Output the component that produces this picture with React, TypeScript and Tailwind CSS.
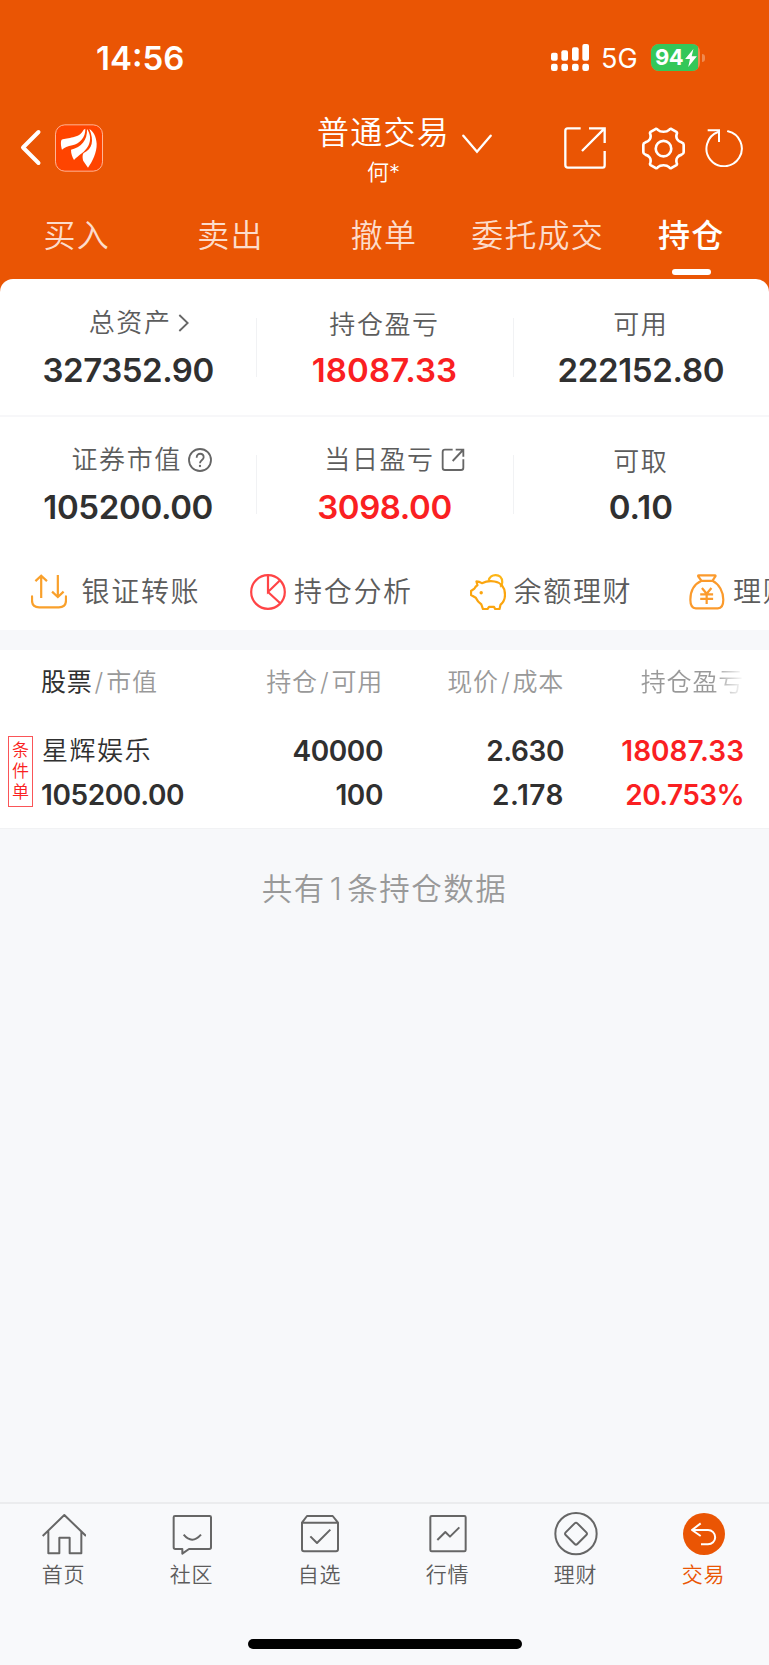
import type { ReactNode } from 'react';

const TABS = ['买入', '卖出', '撤单', '委托成交', '持仓'];

interface Stat {
  label: string;
  value: string;
  red?: boolean;
  icon?: ReactNode;
  shift?: string;
  tracking?: string;
}

const SUMMARY_TOP: Stat[] = [
  {
    label: '总资产',
    value: '327352.90',
    icon: <ArrowRight />,
    shift: '-mt-[1px] mb-[1px] pl-[21px]',
    tracking: 'tracking-[-0.45px]',
  },
  { label: '持仓盈亏', value: '18087.33', red: true, shift: 'mt-[1px] -mb-[1px]', tracking: 'tracking-[0.1px]' },
  { label: '可用', value: '222152.80', shift: 'mt-[1px] -mb-[1px]', tracking: 'tracking-[-0.3px]' },
];

const SUMMARY_BOTTOM: Stat[] = [
  { label: '证券市值', value: '105200.00', icon: <Help />, shift: 'pl-[27px]', tracking: 'tracking-[-0.35px]' },
  {
    label: '当日盈亏',
    value: '3098.00',
    red: true,
    icon: <SmallExternal />,
    shift: 'pl-[20px]',
    tracking: 'tracking-[-0.4px]',
  },
  { label: '可取', value: '0.10', shift: 'mt-[2px] -mb-[2px]' },
];

function ArrowRight() {
  return (
    <svg className="ml-[6px] h-[18px] w-[11px]" viewBox="0 0 33 54" fill="none" stroke="#666" strokeWidth="5.5">
      <path d="M4 3L29 27L4 51" />
    </svg>
  );
}

function Help() {
  return (
    <svg className="ml-[6px] h-[24px] w-[24px]" viewBox="0 0 72 72" fill="none" stroke="#666" strokeWidth="5.5">
      <circle cx="36" cy="36" r="33" />
      <path d="M26 29C26 13 47 14 47 28C47 36 36 36 36 46" />
      <circle cx="36" cy="54" r="3.5" fill="#666" stroke="none" />
    </svg>
  );
}

function SmallExternal() {
  return (
    <svg className="ml-[6px] h-[24px] w-[24px]" viewBox="0 0 72 72" fill="none" stroke="#666" strokeWidth="5.5">
      <path d="M35 5H12Q5 5 5 12V59Q5 66 12 66H60Q67 66 67 59V34" />
      <path d="M44 5H67V26M66 6L35 39" />
    </svg>
  );
}

function StatRow({ items, pad, gap, bar }: { items: Stat[]; pad: string; gap: string; bar: string }) {
  return (
    <div className="grid grid-cols-3">
      {items.map((s, i) => (
        <div key={s.label} className="flex">
          <div className={`flex flex-1 flex-col items-center ${pad}`}>
            <div className={`flex h-[40px] items-center ${s.shift ?? ''}`}>
              <span className="text-[26px] leading-[40px] font-[350] tracking-[1.6px] text-[#5c5c5c]">{s.label}</span>
              {s.icon}
            </div>
            <div
              className={`text-[33px] leading-[40px] font-semibold ${gap} ${s.tracking ?? ''} ${s.red ? 'text-[#fa1f22]' : 'text-[#303030]'}`}
            >
              {s.value}
            </div>
          </div>
          {i < 2 ? <div className={`-mr-px h-[59px] w-px bg-[#f1f2f4] ${bar}`} /> : null}
        </div>
      ))}
    </div>
  );
}

function Logo() {
  return (
    <svg className="h-[48px] w-[48px]" viewBox="0 0 144 142">
      <rect x="1.5" y="1.5" width="141" height="139" rx="28" fill="#ff4400" stroke="#ffb596" strokeWidth="3" />
      <g fill="#fff">
        <path d="M20 46C38 38 72 44 86 16L91 13C92 38 75 58 52 63C38 66 28 70 21 76C18 66 16 52 20 46Z" />
        <path d="M96 14C97 48 80 68 48 76C48 88 52 98 57 107C70 92 90 84 100 64C109 46 106 28 96 14Z" />
        <path d="M103 14C118 50 112 74 86 86C81 92 83 104 85 110L99 130C112 112 126 84 125 58C124 38 116 22 103 14Z" />
      </g>
    </svg>
  );
}

function StatusBar() {
  return (
    <div className="flex h-[112px] items-center justify-between pt-[3px] pr-[64px] pl-[96px]">
      <span className="text-[33px] leading-[40px] font-semibold">14:56</span>
      <div className="flex items-center">
        <svg className="h-[27px] w-[38px]" viewBox="0 0 114 81" fill="#fff">
          <rect x="0" y="26" width="20" height="24" rx="6" />
          <rect x="31" y="19" width="20" height="31" rx="6" />
          <rect x="63" y="10" width="20" height="40" rx="6" />
          <rect x="94" y="0" width="20" height="50" rx="6" />
          <rect x="0" y="59" width="20" height="22" rx="7" />
          <rect x="31" y="59" width="20" height="22" rx="7" />
          <rect x="63" y="59" width="20" height="22" rx="7" />
          <rect x="94" y="59" width="20" height="22" rx="7" />
        </svg>
        <span className="ml-[12px] w-[50px] pt-[2px] text-[27px] leading-[32px]">5G</span>
        <div className="flex h-[27px] w-[49px] overflow-hidden rounded-[8px] bg-[#f08a50]">
          <div className="flex h-full w-[47px] items-center bg-[#34c759] pl-[4px]">
            <span className="text-[22px] leading-[27px] font-bold tracking-[-0.5px]">94</span>
            <svg className="ml-[2px] h-[18px] w-[12px]" viewBox="0 0 34 52" fill="#fff">
              <path d="M24 0L0 29H14L9 52L34 21H19Z" />
            </svg>
          </div>
        </div>
        <div className="ml-[2px] h-[8px] w-[3px] rounded-r-full bg-[#f08a50]" />
      </div>
    </div>
  );
}

function TitleBar() {
  return (
    <div className="grid h-[80px] grid-cols-[317px_133px_1fr]">
      <div className="flex items-center pb-[9px] pl-[20px]">
        <svg className="h-[37px] w-[22px]" viewBox="0 0 22 37" fill="none" stroke="#fff" strokeWidth="4" strokeLinecap="round" strokeLinejoin="round">
          <path d="M18.5 3L3 18.5L18.5 34" />
        </svg>
        <div className="ml-[13px]">
          <Logo />
        </div>
      </div>
      <div className="text-center whitespace-nowrap">
        <div className="pt-[1px] text-[32px] leading-[40px] font-[350] tracking-[1.2px]">普通交易</div>
        <div className="-mt-[1px] text-[22px] leading-[40px] font-[350]">何*</div>
      </div>
      <div className="flex items-center pb-[8px] pl-[12px]">
        <svg className="-mt-[8px] h-[20px] w-[30px]" viewBox="0 0 90 60" fill="none" stroke="#fff" strokeWidth="7" strokeLinecap="round">
          <path d="M4 5L45 53L86 5" />
        </svg>
        <svg className="ml-[72px] h-[42px] w-[42px]" viewBox="0 0 126 126" fill="none" stroke="#fff" strokeWidth="7">
          <path d="M50 4H11Q4 4 4 11V114Q4 122 12 122H116Q122 122 122 115V72" />
          <path d="M75 4H122V48M121 5L54 72" />
        </svg>
        <svg className="ml-[36px] h-[43px] w-[43px]" viewBox="0 0 130 127" fill="none" stroke="#fff" strokeWidth="8" strokeLinejoin="round">
          <path d="M88 4L104 13Q107 15 105 20C101 32 108 42 120 45Q126 47 126 52V75Q126 80 120 82C108 85 101 95 105 107Q107 112 104 114L88 123Q85 124 82 120C74 112 56 112 48 120Q45 124 42 123L26 114Q23 112 25 107C29 95 22 85 10 82Q4 80 4 75V52Q4 47 10 45C22 42 29 32 25 20Q23 15 26 13L42 4Q45 3 48 7C56 15 74 15 82 7Q85 3 88 4Z" />
          <circle cx="65" cy="64" r="23.5" />
        </svg>
        <svg className="ml-[20px] h-[38px] w-[38px]" viewBox="0 0 114 114" fill="none" stroke="#fff" strokeWidth="6">
          <path d="M69 7A53 53 0 1 1 39 9" strokeLinecap="round" />
          <path d="M8 4H42V39" />
        </svg>
      </div>
    </div>
  );
}

const QUICK_LINKS = [
  {
    label: '银证转账',
    gap: 'gap-[15px]',
    icon: (
      <g stroke="#f9a02b">
        <path d="M3 66V78Q3 98 24 98H82Q103 98 103 78V66" strokeLinecap="round" />
        <path d="M30 71V5M13 21L30 5L47 21M79 3V68M62 52L79 68L96 52" />
      </g>
    ),
  },
  {
    label: '持仓分析',
    gap: 'gap-[8px]',
    icon: (
      <g stroke="#ff4446">
        <circle cx="53" cy="53" r="49.5" />
        <path d="M53 3V53L87 20M53 53L89 86" />
      </g>
    ),
  },
  {
    label: '余额理财',
    gap: 'gap-[8px]',
    icon: (
      <g stroke="#fba50f" strokeLinejoin="round">
        <path d="M55 20C58 -2 95 -4 95 24Q95 33 89 38" stroke="#fdb515" />
        <path d="M19 22Q27 22 35 27C48 21 59 20 72 22C91 25 103 40 103 61C103 74 99 83 90 90L87 103H74L71 97H56L52 103H38L33 89Q23 83 17 70L3 62V50L13 43Q16 36 22 33Z" />
        <circle cx="33" cy="55" r="5" fill="#fba50f" stroke="none" />
      </g>
    ),
  },
  {
    label: '理财',
    gap: 'gap-[8px]',
    icon: (
      <g stroke="#fb9a2c" strokeLinejoin="round">
        <path d="M29 4H76Q80 4 77 8L69 20H37L28 8Q25 4 29 4Z" />
        <path d="M37 20C15 30 4 52 4 76Q4 101 20 101H85Q101 101 101 76C101 52 89 30 69 20" />
        <path d="M38 41L52 58L66 41M52 58V88M33 60H71M33 73H71" />
      </g>
    ),
  },
];

function QuickLinks() {
  return (
    <div className="flex h-[76px] items-center gap-[49.5px] overflow-hidden pl-[30.5px]">
      {QUICK_LINKS.map((q) => (
        <div key={q.label} className={`flex w-[170px] shrink-0 items-center ${q.gap}`}>
          <svg className="h-[36px] w-[36px] shrink-0" viewBox="0 0 106 106" fill="none" strokeWidth="6.5">
            {q.icon}
          </svg>
          <span className="text-[28px] leading-[40px] font-[350] tracking-[1.7px] whitespace-nowrap text-[#5c5c5c]">
            {q.label}
          </span>
        </div>
      ))}
    </div>
  );
}

function Holdings() {
  return (
    <div className="bg-white">
      <div className="grid h-[63px] grid-cols-[222px_161px_181px_1fr] items-center text-right text-[25px] leading-[40px] font-[350] tracking-[0.8px] text-[#999]">
        <div className="pl-[41px] text-left">
          <span className="font-normal text-[#303030]">股票</span>
          <span className="px-[2px]">/</span>市值
        </div>
        <div>
          持仓<span className="px-[2px]">/</span>可用
        </div>
        <div>
          现价<span className="px-[2px]">/</span>成本
        </div>
        <div className="pr-[25px]">
          <span className="bg-linear-to-r from-[#999] from-70% to-white bg-clip-text text-transparent">持仓盈亏</span>
        </div>
      </div>
      <div className="flex h-[116px] border-b border-[#f1f2f4] pt-[16px]">
        <div className="mt-[7px] ml-[8px] flex h-[71px] w-[25px] flex-col items-center justify-center border border-[#fa5558] text-[17px] leading-[21px] font-[350] text-[#fa1f22]">
          <span>条</span>
          <span>件</span>
          <span>单</span>
        </div>
        <div className="grid flex-1 grid-cols-[189px_161px_181px_180px] content-start text-right text-[28px] leading-[44px] font-semibold tracking-[-0.4px] text-[#303030]">
          <div className="pl-[9px] text-left text-[26px] font-[350] tracking-[1.5px]">星辉娱乐</div>
          <div>40000</div>
          <div>2.630</div>
          <div className="tracking-normal text-[#fa1f22]">18087.33</div>
          <div className="pl-[8px] text-left">105200.00</div>
          <div>100</div>
          <div className="tracking-[0.5px]">2.178</div>
          <div className="tracking-[-0.6px] text-[#fa1f22]">20.753%</div>
        </div>
      </div>
    </div>
  );
}

const NAV = [
  { label: '首页', icon: <path d="M2 72L67 9L132 72M19 58V124H52V77H83V124H118V58" /> },
  {
    label: '社区',
    icon: (
      <path d="M15 12H119Q123 12 123 16V106Q123 111 118 111H57L37 125V111H16Q11 111 11 106V16Q11 12 15 12ZM41 68Q66 98 93 68" />
    ),
  },
  {
    label: '自选',
    icon: (
      <path d="M12 32L27 12H104L120 32V112Q120 118 114 118H18Q12 118 12 112ZM12 32H120M37 73L57 93L97 53" />
    ),
  },
  {
    label: '行情',
    icon: (
      <>
        <rect x="13" y="12" width="106" height="106" rx="4" />
        <path d="M34 84L58 60L72 74L100 46" />
      </>
    ),
  },
  {
    label: '理财',
    icon: (
      <>
        <circle cx="66" cy="65" r="62" />
        <path d="M62 34Q66 30 70 34L97 61Q101 65 97 69L70 96Q66 100 62 96L35 69Q31 65 35 61Z" />
      </>
    ),
  },
  {
    label: '交易',
    active: true,
    icon: (
      <>
        <circle cx="66" cy="66" r="63" fill="#ea5504" stroke="none" />
        <path d="M56 34L30 54L56 72M30 54H78A21.5 21.5 0 0 1 78 97H57" stroke="#fff" strokeWidth="6" />
      </>
    ),
  },
];

function BottomNav() {
  return (
    <div className="flex h-[163px] flex-col items-center border-t-2 border-[#ebecee] bg-[#f8f9fb] pt-[8px]">
      <div className="grid w-full grid-cols-6 pr-[1px]">
        {NAV.map((n) => (
          <div key={n.label} className="flex flex-col items-center">
            <svg className="h-[44px] w-[44px]" viewBox="0 0 132 132" fill="none" stroke="#666" strokeWidth="6" strokeLinejoin="round">
              {n.icon}
            </svg>
            <span
              className={`mt-[4px] mr-[1px] text-[21px] leading-[30px] font-[350] tracking-[0.7px] ${n.active ? 'text-[#ea5504]' : 'text-[#5c5c5c]'}`}
            >
              {n.label}
            </span>
          </div>
        ))}
      </div>
      <div className="mt-[49px] h-[10px] w-[274px] rounded-full bg-black" />
    </div>
  );
}

export default function App() {
  return (
    <div className="flex h-[1665px] w-[769px] flex-col overflow-hidden bg-[#f7f8fa] font-['Inter','Noto_Sans_CJK_SC',sans-serif]">
      <div className="bg-[#ea5504] text-white">
        <StatusBar />
        <TitleBar />
        <div className="grid h-[87px] grid-cols-5 pt-[24px] pr-[1px]">
          {TABS.map((t) => {
            const active = t === '持仓';
            return (
              <div key={t} className="flex flex-col items-center">
                <span
                  className={`text-[32px] leading-[40px] tracking-[1.2px] whitespace-nowrap ${active ? 'font-medium' : 'font-[350] text-[#fcdccb]'}`}
                >
                  {t}
                </span>
                {active ? <div className="mt-[13px] h-[6px] w-[39px] rounded-full bg-white" /> : null}
              </div>
            );
          })}
        </div>
        <div className="h-[351px] rounded-t-[13px] bg-white">
          <div className="h-[138px] border-b-2 border-[#f7f7f9]">
            <StatRow items={SUMMARY_TOP} pad="pt-[25px]" gap="mt-[6px]" bar="mt-[39px]" />
          </div>
          <div className="h-[137px]">
            <StatRow items={SUMMARY_BOTTOM} pad="pt-[23px]" gap="mt-[7px]" bar="mt-[38px]" />
          </div>
          <QuickLinks />
        </div>
      </div>
      <div className="h-[20px]" />
      <Holdings />
      <div className="flex-1 pt-[40px] text-center text-[30.5px] leading-[40px] font-[350] tracking-[1.5px] text-[#999]">
        共有<span className="px-[4px]">1</span>条持仓数据
      </div>
      <BottomNav />
    </div>
  );
}
